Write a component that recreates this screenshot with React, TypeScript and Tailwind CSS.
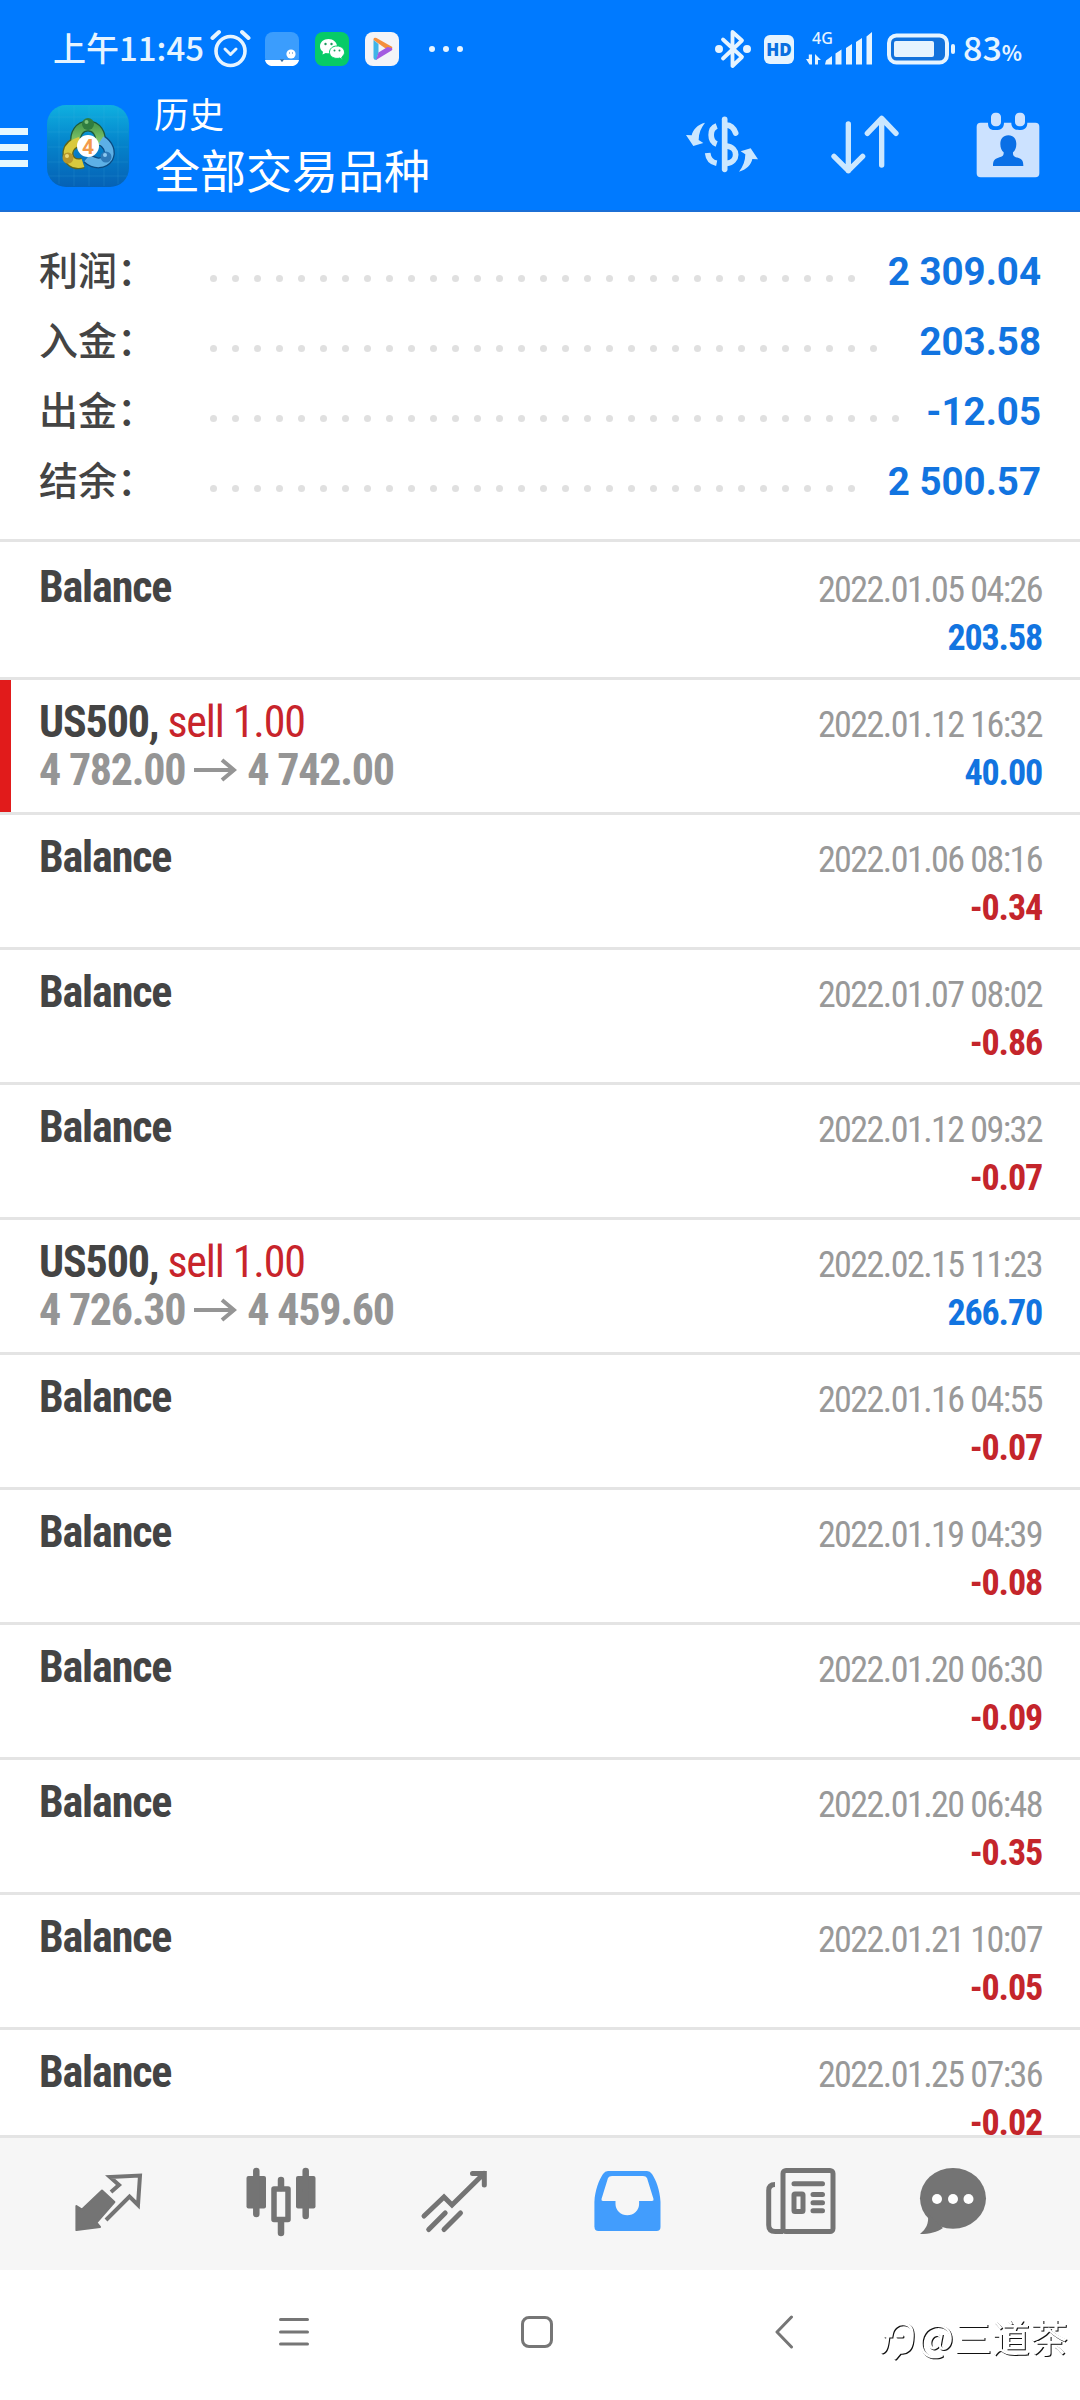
import clsx from 'clsx';

type Deal = {
    symbol: string;
    action?: string;
    open?: string;
    close?: string;
    time: string;
    profit: string;
    marked?: boolean;
};

const summary = [
    { label: '利润', value: '2 309.04', dots: 30 },
    { label: '入金', value: '203.58', dots: 31 },
    { label: '出金', value: '-12.05', dots: 32 },
    { label: '结余', value: '2 500.57', dots: 30 },
];

const deals: Deal[] = [
    { symbol: 'Balance', time: '2022.01.05 04:26', profit: '203.58' },
    { symbol: 'US500', action: 'sell 1.00', open: '4 782.00', close: '4 742.00', time: '2022.01.12 16:32', profit: '40.00', marked: true },
    { symbol: 'Balance', time: '2022.01.06 08:16', profit: '-0.34' },
    { symbol: 'Balance', time: '2022.01.07 08:02', profit: '-0.86' },
    { symbol: 'Balance', time: '2022.01.12 09:32', profit: '-0.07' },
    { symbol: 'US500', action: 'sell 1.00', open: '4 726.30', close: '4 459.60', time: '2022.02.15 11:23', profit: '266.70' },
    { symbol: 'Balance', time: '2022.01.16 04:55', profit: '-0.07' },
    { symbol: 'Balance', time: '2022.01.19 04:39', profit: '-0.08' },
    { symbol: 'Balance', time: '2022.01.20 06:30', profit: '-0.09' },
    { symbol: 'Balance', time: '2022.01.20 06:48', profit: '-0.35' },
    { symbol: 'Balance', time: '2022.01.21 10:07', profit: '-0.05' },
    { symbol: 'Balance', time: '2022.01.25 07:36', profit: '-0.02' },
];

function StatusBar() {
    return (
        <div className="flex h-[98px] items-center pl-[53px] text-[#e6f4ff]">
            <div className="w-[157px] whitespace-nowrap pb-[3px] font-['Noto_Sans_CJK_SC',sans-serif] text-[33px] font-medium leading-none">上午11:45</div>
            {/* Alarm */}
            <svg className="h-[40px] w-[42px]" viewBox="0 0 42 40" fill="none" stroke="currentColor" strokeLinecap="round">
                <circle cx="20.5" cy="22" r="14.5" strokeWidth="3.6" />
                <path d="M2.5 9L9 3M32 3l6.5 6" strokeWidth="4" />
                <path d="M15 20l5.5 5.5L26 20" strokeWidth="3" strokeLinejoin="round" />
            </svg>
            <svg className="ml-[13px] h-[34px] w-[34px]" viewBox="0 0 34 34">
                <rect width="34" height="34" rx="8" fill="#3b9dfd" />
                <path d="M0 28h34c-1 4-4 6-8 6H8c-4 0-7-2-8-6z" fill="#fff" />
                <circle cx="26" cy="22" r="4.6" fill="#fff" />
                <path d="M15.5 27.5h3l-1.5 2zM24 21h1M27 21h1" stroke="#3b7dbd" strokeWidth="1" />
            </svg>
            {/* WeChat */}
            <svg className="ml-[16px] h-[34px] w-[34px]" viewBox="0 0 34 34">
                <rect width="34" height="34" rx="8" fill="#07cb67" />
                <path d="M13.5 7C8.500 7 5 10.200 5 14.200c0 2.400 1.200 4.300 3 5.600L7.500 22.500l3.200-1.600c1 .3 2 .4 3.300.4 4.600 0 8-3.200 8-7.100S18.200 7 13.500 7z" fill="#fff" />
                <path d="M22 14c-4.300 0-7.500 2.700-7.500 6.200s3.200 6.200 7.500 6.200c1 0 1.900-.1 2.700-.4l2.600 1.400-.5-2.400c1.700-1.200 2.700-2.900 2.700-4.800C29.500 16.700 26.200 14 22 14z" fill="#fff" stroke="#07cb67" strokeWidth="1" />
                <g fill="#1f9a60">
                    <circle cx="10.5" cy="12" r="1.2" />
                    <circle cx="16.5" cy="12" r="1.2" />
                    <circle cx="19.5" cy="18.5" r="1" />
                    <circle cx="24.5" cy="18.5" r="1" />
                </g>
            </svg>
            {/* Video app */}
            <svg className="ml-[16px] h-[34px] w-[34px]" viewBox="0 0 34 34">
                <rect width="34" height="34" rx="8" fill="#f3f4f8" />
                <path d="M8.500 8V7q.5-2 3-1l15 8.500q1.500 1 .5 2l-5 1z" fill="#f58f3c" />
                <path d="M8.500 8l5 4v9l-2 7q-3 0-3-2.500z" fill="#3fb4e8" />
                <path d="M11 28l2.500-7.500 9-5.500 4.500 1q1 1.500-.5 2.500z" fill="#a35be0" />
            </svg>
            <svg className="ml-[29px] h-[8px] w-[36px]" viewBox="0 0 36 8" fill="currentColor">
                <circle cx="4" cy="4" r="3" />
                <circle cx="18" cy="4" r="3" />
                <circle cx="32" cy="4" r="3" />
            </svg>

            <div className="ml-auto flex items-center pr-[58px]">
                {/* Bluetooth */}
                <svg className="h-[40px] w-[36px]" viewBox="0 0 36 40" fill="none" stroke="currentColor" strokeWidth="3.800" strokeLinecap="round" strokeLinejoin="round">
                    <path d="M8 10.500L27 28 17.500 37V3L27 11.500 8 29.500" />
                    <circle cx="4" cy="20" r="2" strokeWidth="4" />
                    <circle cx="32" cy="20" r="2" strokeWidth="4" />
                </svg>
                <div className="ml-[13px] flex h-[29px] w-[30px] items-center justify-center rounded-[6px] bg-[#e6f4ff] font-['Open_Sans',sans-serif] text-[17px] font-extrabold leading-none text-[#0a6fe0]">HD</div>
                <div className="relative ml-[12px] h-[34px] w-[68px]">
                    <div className="absolute left-[6px] top-0 font-['Noto_Sans',sans-serif] text-[16px] font-medium leading-[13px]">4G</div>
                    <svg className="h-[34px] w-[68px]" viewBox="0 0 68 34" fill="currentColor">
                        <path d="M6 22.500v10h-2.500L0 27h2.800v-4.500zM9 32.500V22l6 6h-3v4.500z" />
                        <path d="M19 32.500l1-4 6-4.500v8.500zM29.500 32.500V21.500l6-4v15zM40 32.500V16l6-4v20.500zM50 32.500V10l6-4v26.500zM60.500 32.500V4.500l5.500-4.500v32.500z" />
                    </svg>
                </div>
                <svg className="ml-[13px] h-[32px] w-[70px]" viewBox="0 0 70 32">
                    <rect x="2" y="2.500" width="58" height="27" rx="7.500" fill="#1272dc" stroke="#e6f4ff" strokeWidth="4" />
                    <rect x="7" y="8" width="40" height="16" rx="2" fill="#e6f4ff" />
                    <rect x="64" y="11" width="4" height="10" rx="2" fill="#e6f4ff" />
                </svg>
                <div className="ml-[6px] flex w-[59px] items-baseline whitespace-nowrap pb-[5px] font-['Noto_Sans_CJK_SC',sans-serif] font-medium leading-none">
                    <span className="text-[34px]">83</span>
                    <span className="text-[21px] font-bold">%</span>
                </div>
            </div>
        </div>
    );
}

function AppLogo() {
    return (
        <svg className="ml-[19px] h-[82px] w-[82px] shrink-0" viewBox="0 0 82 82">
            <defs>
                <linearGradient id="logoBg" x1="0" y1="0" x2="0" y2="1">
                    <stop offset="0" stopColor="#0fb0e0" />
                    <stop offset="0.45" stopColor="#0585cc" />
                    <stop offset="1" stopColor="#0561b5" />
                </linearGradient>
                <linearGradient id="logoGreen" x1="0" y1="0" x2="0" y2="1">
                    <stop offset="0" stopColor="#4f9f50" />
                    <stop offset="1" stopColor="#8fd070" />
                </linearGradient>
            </defs>
            <rect width="82" height="82" rx="19" fill="url(#logoBg)" />
            <path d="M12 3v76M27 1v80M42 1v80M57 1v80M71 3v76M2 12h78M1 27h80M1 42h80M1 57h80M2 71h78" stroke="#4fc0ea" strokeOpacity="0.15" fill="none" />
            <path d="M29 40C27 28 33 21 41 21s14 7 12 19" fill="none" stroke="#1d5a3a" strokeWidth="11" />
            <path d="M36 58C27 61 20 55 21 47c1-6 5-9 12-11" fill="none" stroke="#5f661c" strokeWidth="11" />
            <path d="M54 35c8 5 10 12 7 18-4 6-13 7-21 0" fill="none" stroke="#0b4a80" strokeWidth="11" />
            <path d="M29 40C27 28 33 21 41 21s14 7 12 19" fill="none" stroke="url(#logoGreen)" strokeWidth="8.500" />
            <path d="M36 58C27 61 20 55 21 47c1-6 5-9 12-11" fill="none" stroke="#d9c93e" strokeWidth="8.500" />
            <path d="M54 35c8 5 10 12 7 18-4 6-13 7-21 0" fill="none" stroke="#5db0e6" strokeWidth="8.500" />
            <circle cx="41" cy="19" r="6" fill="#2f7d40" />
            <circle cx="21" cy="53" r="5.500" fill="#b8962a" />
            <circle cx="59" cy="52" r="5.500" fill="#2f7ab8" />
            <circle cx="39.500" cy="17" r="2" fill="#7cc47c" />
            <circle cx="20" cy="51" r="2" fill="#ecd878" />
            <circle cx="58" cy="50" r="2" fill="#8cc8f0" />
            <circle cx="41" cy="41" r="11" fill="#fff" />
            <text x="41" y="48.500" textAnchor="middle" fontFamily="Roboto, sans-serif" fontSize="21" fontWeight="700" fill="#f39a4a">4</text>
        </svg>
    );
}

function Header() {
    return (
        <header className="h-[212px] border-b-2 border-[#1b6fd6] bg-[#007aff]">
            <StatusBar />
            <div className="flex h-[96px] items-center text-white">
                <div className="flex w-[28px] flex-col gap-[9px] pt-[3px]">
                    <span className="h-[7px] bg-[#e6f8ff]" />
                    <span className="h-[7px] bg-[#e6f8ff]" />
                    <span className="h-[7px] bg-[#e6f8ff]" />
                </div>
                <AppLogo />
                <div className="ml-[25px] flex flex-col pb-[7px] font-['Noto_Sans_CJK_SC',sans-serif]">
                    <h2 className="text-[35px] leading-[50px]">历史</h2>
                    <h1 className="text-[46px] leading-[60px]">全部交易品种</h1>
                </div>
                <div className="ml-auto flex items-center pb-[3px] pr-[40px] text-[#cbe7ff]">
                    {/* Deposit / withdrawal filter */}
                    <svg className="h-[57px] w-[72px]" viewBox="0 0 216 171" fill="none" stroke="currentColor" strokeWidth="17">
                        <path d="M116 10v150" strokeLinecap="round" />
                        <path d="M120 27c16 0 24 10 29 24" strokeLinecap="round" />
                        <path d="M92 30C70 38 70 76 92 84M65 111c2 18 12 28 27 31M122 90c36 4 36 48 0 52" />
                        <path id="swapArrow" d="M57 20C35 25 20 42 17 58L0 57l22 33 30-9-14-9c0-20 7-37 19-52z" fill="currentColor" stroke="none" />
                        <use href="#swapArrow" transform="rotate(180 108 93.500)" />
                    </svg>
                    <svg className="ml-[72px] h-[61px] w-[70px]" viewBox="0 0 210 183" fill="none" stroke="currentColor" strokeWidth="16" strokeLinecap="round" strokeLinejoin="round">
                        <path d="M55 30v140M12 127l43 43 43-43M155 153V13M112 58l43-45 43 45" />
                    </svg>
                    <svg className="ml-[76px] h-[66px] w-[64px]" viewBox="0 0 192 198" fill="#cce2ff">
                        <path d="M14 32H36c0 20 10 22 24 22s24-6 24-22h22c0 16 10 22 24 22s24-6 24-22h24a12 12 0 0 1 12 12v140a12 12 0 0 1-12 12H14A12 12 0 0 1 2 184V44a12 12 0 0 1 12-12z" />
                        <rect x="45" y="2" width="30" height="41" rx="13" />
                        <rect x="117" y="2" width="30" height="41" rx="13" />
                        <path d="M97 70c-16 0-24 12-24 26 0 12 4 20 10 25 1 12-6 13-18 17-10 3-14 9-14 24h91c0-15-4-21-14-24-12-4-18-5-17-17 6-5 10-13 10-25 0-14-8-26-24-26z" fill="#0a6fe6" />
                    </svg>
                </div>
            </div>
        </header>
    );
}

function Summary() {
    return (
        <section className="h-[330px] border-b-[3px] border-[#e4e4e4] pl-[39px] pr-[39px] pt-[25px]">
            {summary.map((row) => (
                <div key={row.label} className="flex h-[70px] items-center">
                    <div className="w-[171px] pb-[8px] font-['Noto_Sans_CJK_SC',sans-serif] text-[39px] font-medium leading-[62px] text-[#444]">{row.label}：</div>
                    <div className="flex gap-[15px] pt-[12px]">
                        {Array.from({ length: row.dots }, (_, i) => (
                            <span key={i} className="h-[7px] w-[7px] rounded-full bg-[#e0e0e0]" />
                        ))}
                    </div>
                    <div className="ml-auto whitespace-nowrap font-[Roboto,sans-serif] text-[38.5px] font-bold text-[#1274e0]">{row.value}</div>
                </div>
            ))}
        </section>
    );
}

function DealRow({ deal, first }: { deal: Deal; first: boolean }) {
    return (
        <div className={clsx(
            "flex shrink-0 justify-between border-b-[3px] border-[#e4e4e4] pr-[38px] font-['Roboto_Condensed',Roboto,sans-serif] [font-stretch:75%]",
            first ? 'h-[138px] pt-[3px]' : 'h-[135px]'
        )}>
            <div className="flex">
                <div className={clsx('w-[11px]', deal.marked && 'bg-[#e11b1b]')} />
                <div className="pl-[28px] pt-[18px] text-[44px] leading-[48px] tracking-[-1.15px]">
                    <div className="whitespace-nowrap font-bold text-[#444]">
                        {deal.symbol}
                        {deal.action && <>, <span className="font-normal text-[#c8242b]">{deal.action}</span></>}
                    </div>
                    {deal.open && (
                        <div className="flex items-center whitespace-nowrap font-bold tracking-[-1.25px] text-[#959595]">
                            {deal.open}
                            <svg className="ml-[9px] mr-[10px] h-[24px] w-[43px]" viewBox="0 0 43 24" fill="none" stroke="currentColor" strokeWidth="4">
                                <path d="M0 12h40M28 2l12 10-12 10" />
                            </svg>
                            {deal.close}
                        </div>
                    )}
                </div>
            </div>
            <div className="whitespace-nowrap pt-[21px] text-right text-[36px] leading-[48px]">
                <div className="tracking-[-1.55px] text-[#999]">{deal.time}</div>
                <div className={clsx('font-bold tracking-[-1.15px]', deal.profit.startsWith('-') ? 'text-[#c4252b]' : 'text-[#1274e0]')}>{deal.profit}</div>
            </div>
        </div>
    );
}

function TabBar() {
    return (
        <nav className="flex h-[135px] items-center border-t-[3px] border-[#e4e4e4] bg-[#f6f6f6] pl-[21px] text-[#747474]">
            {/* Quotes */}
            <div className="flex w-[173px] justify-center">
                <svg className="h-[80px] w-[80px]" viewBox="0 0 80 80">
                    <path d="M8.400 42L14 45.500 34 26.500 46.400 38 28.500 58.700 32 63 8.400 66z" fill="currentColor" stroke="currentColor" strokeWidth="2" strokeLinejoin="round" />
                    <path d="M43 28l8-7-9-8 30-1.500-2 29.500-8.500-8.500L38 56" fill="none" stroke="currentColor" strokeWidth="4" />
                </svg>
            </div>
            {/* Charts */}
            <div className="flex w-[173px] justify-center">
                <svg className="h-[80px] w-[80px]" viewBox="0 0 80 80" fill="currentColor">
                    <rect x="5.500" y="12" width="19.500" height="32.500" rx="2" />
                    <rect x="55" y="12" width="19.500" height="32.500" rx="2" />
                    <rect x="33" y="25" width="14" height="30.500" fill="none" stroke="currentColor" strokeWidth="5.500" strokeLinejoin="round" />
                    <path d="M15.300 7v43M64.700 7v45M40 16v8M40 57v12" stroke="currentColor" strokeWidth="6.500" strokeLinecap="round" />
                </svg>
            </div>
            {/* Trade */}
            <div className="flex w-[173px] justify-center">
                <svg className="h-[80px] w-[80px]" viewBox="0 0 80 80" fill="none" stroke="currentColor" strokeWidth="5" strokeLinecap="round">
                    <path d="M10 52l20-19 8 8L70 9.500M58.500 9.500H70.300V21M14.700 65.500l16.500-16.500M30 65.500l16.500-16.500" />
                </svg>
            </div>
            {/* History */}
            <div className="flex w-[174px] justify-center">
                <svg className="h-[80px] w-[80px]" viewBox="0 0 80 80">
                    <path
                        d="M7.400 63V38C8 26 12 16 16 10q2-3 5-3h39q3 0 5 3c4 6 8 16 8.500 28v25q0 4-4 4h-58q-4 0-4-4zM25 12q-3 0-4 2l-6.500 21q-.5 2 1.500 2h12.500v3a11.800 11.300 0 0 0 23.600 0v-3H65q2 0 1.500-2L60 14q-1-2-4-2z"
                        fill="#429dfd"
                        fillRule="evenodd"
                    />
                </svg>
            </div>
            {/* News */}
            <div className="flex w-[173px] justify-center">
                <svg className="h-[80px] w-[80px]" viewBox="0 0 80 80" fill="none" stroke="currentColor" strokeWidth="5" strokeLinecap="round">
                    <rect x="22" y="6.500" width="50" height="61" rx="3" />
                    <path d="M14 20.500q-6.300 0-6.300 6V61q0 6.500 6.500 6.500H22" strokeLinecap="butt" />
                    <path d="M33 19.700h28.500M52 30.500h9.500M52 38.700h9.500M52 46.700h9.500" />
                    <rect x="33" y="30" width="9" height="17.500" rx="1" />
                </svg>
            </div>
            {/* Messages */}
            <div className="flex w-[132px] justify-center">
                <svg className="h-[80px] w-[80px]" viewBox="0 0 80 80" fill="currentColor">
                    <ellipse cx="40" cy="34.300" rx="33" ry="30.400" />
                    <path d="M15 50c1 10-2 15-8 20 10 0 17-2 23-6z" />
                    <g fill="#fff">
                        <circle cx="24" cy="35" r="5" />
                        <circle cx="40" cy="35" r="5" />
                        <circle cx="55.500" cy="35" r="5" />
                    </g>
                </svg>
            </div>
        </nav>
    );
}

function SystemNav() {
    return (
        <div className="relative flex h-[130px] items-center bg-white pb-[6px] pl-[279px] text-[#767676]">
            <svg className="h-[32px] w-[30px]" viewBox="0 0 30 32" fill="none" stroke="currentColor" strokeWidth="3" strokeLinecap="round">
                <path d="M1.500 3.500h27M1.500 16h27M1.500 28h27" />
            </svg>
            <div className="ml-[212px] h-[32px] w-[32px] rounded-[8px] border-[3px] border-[#767676]" />
            <svg className="ml-[222px] h-[34px] w-[20px]" viewBox="0 0 20 34" fill="none" stroke="currentColor" strokeWidth="3" strokeLinecap="round" strokeLinejoin="round">
                <path d="M16.500 2L2 17l14.500 15" />
            </svg>
            {/* Author mark, white with a thin shadow */}
            <div className="absolute right-[12px] top-[39px] flex items-center text-white [filter:drop-shadow(1px_1px_0.5px_#111)]">
                <svg className="mt-[9px] h-[44px] w-[38px]" viewBox="0 0 38 44" fill="none" stroke="currentColor" strokeWidth="3" strokeLinecap="round">
                    <path d="M2 34c4-1 5-7 6-16M5 18h6c1-9 7-13 14-12 7 1 8 8 7 16-1 9-5 13-12 12l-5 6M17 18h5" />
                </svg>
                <span className="font-['Noto_Sans_CJK_SC',sans-serif] text-[38px] leading-[44px]">@三道茶</span>
            </div>
        </div>
    );
}

export default function App() {
    return (
        <div className="flex h-[2400px] w-[1080px] flex-col overflow-hidden bg-white">
            <Header />
            <Summary />
            <main className="flex min-h-0 flex-1 flex-col overflow-hidden">
                {deals.map((deal, i) => (
                    <DealRow key={deal.time} deal={deal} first={i === 0} />
                ))}
            </main>
            <TabBar />
            <SystemNav />
        </div>
    );
}
